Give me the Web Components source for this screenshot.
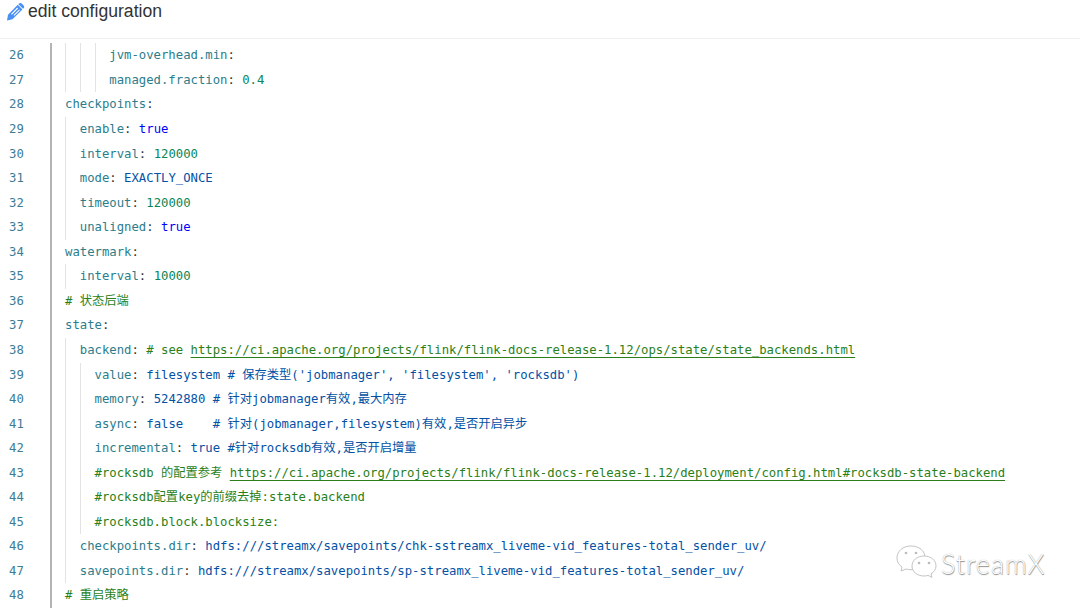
<!doctype html>
<html lang="en">
<head>
<meta charset="utf-8">
<title>edit configuration</title>
<style>
  html, body { margin: 0; background: #fff; }
</style>
</head>
<body>

<template id="page-tpl">
  <style>
    :host { display: block; position: relative; width: 1080px; height: 610px; overflow: hidden; background: #fff; }
  </style>
  <slot name="header"></slot>
  <slot></slot>
  <slot name="overlay"></slot>
</template>

<template id="header-tpl">
  <style>
    :host {
      display: flex; align-items: center; gap: 3px;
      box-sizing: border-box; height: 39px; padding: 0 0 16px 6px;
      border-bottom: 1px solid #f0f0f0;
      font: 17.6px/22px "Liberation Sans", Arial, sans-serif; color: #333;
    }
    svg { width: 19px; height: 19px; flex: none; }
  </style>
  <svg viewBox="0 0 19 19" aria-hidden="true">
    <path fill="#4a90f5" d="M11.800 2.800l4.600 4.600-9.900 9.900-5.500 1.200 1-5.700z"/>
    <path fill="#4a90f5" d="M13 1.600c.8-.8 2-.8 2.800 0l1.800 1.800c.8.800.8 2 0 2.800l-.6.6-4.600-4.600z"/>
    <path fill="#fff" d="M11.300 5.600l.8.8-6.300 6.300-.8-.8z"/>
    <path fill="#fff" d="M13.200 7.500l.7.700-5.600 5.600-.7-.7z"/>
  </svg>
  <slot></slot>
</template>

<template id="editor-tpl">
  <style>
    :host { display: block; padding-top: 4.4px; }
  </style>
  <slot></slot>
</template>

<template id="line-tpl"><style>
    :host {
      display: flex; height: 24.55px;
      font: 12.275px/24.55px "DejaVu Sans Mono", Menlo, "Noto Sans CJK SC", monospace;
      color: #333;
    }
    .num { box-sizing: border-box; width: 50px; flex: none; padding-left: 9px; color: #3d7c94; }
    .bar { width: 2px; flex: none; background: #b4b4b4; }
    .code { display: flex; padding-left: 13px; white-space: pre; }
    .guides { display: flex; }
    .guide { width: 14.78px; flex: none; box-sizing: border-box; border-left: 1px solid #e3e3e3; }
  </style><div class="num"></div><div class="bar"></div><div class="code"><div class="guides"></div><div class="text"><slot></slot></div></div></template>

<template id="tok-tpl"><style>
    :host { display: inline; }
    :host([t=k]) { color: #2b7d8c; }
    :host([t=s]) { color: #0451a5; }
    :host([t=n]) { color: #098658; }
    :host([t=b]) { color: #0000ff; }
    :host([t=c]) { color: #2a7f1a; }
    :host([t=u]) { color: #2a7f1a; text-decoration: underline; text-underline-offset: 3px; }
  </style><slot></slot></template>

<template id="mark-tpl">
  <style>
    :host {
      position: absolute; left: 895px; top: 544px;
      display: flex; align-items: center; gap: 2px;
      font: 300 27px/40px Lato, "Liberation Sans", sans-serif; color: #fff;
      letter-spacing: 1px;
      text-shadow: 0.5px 0.5px 1px #8a8a8a, 0 0 1px #a8a8a8;
    }
    svg { width: 44px; height: 40px; flex: none; }
  </style>
  <svg viewBox="0 0 44 40" fill="#fff" stroke="#c4c4c4" stroke-width="1">
    <path d="M16 2c-8 0-14 5-14 12 0 4 2 7 5 9l-1 4 5-2c2 .5 3 .7 5 .7 8 0 14-5 14-12S24 2 16 2z"/>
    <path d="M29 12c-7 0-12 4.500-12 10s5 10 12 10c1.500 0 3-.2 4-.6l4 2-1-3.500c3-2 5-4.500 5-8 0-5.500-5-9.900-12-9.900z"/>
    <circle cx="11" cy="9" r="1.300" fill="#bbb" stroke="none"/>
    <circle cx="21" cy="9" r="1.300" fill="#bbb" stroke="none"/>
    <circle cx="24" cy="19" r="1.300" fill="#bbb" stroke="none"/>
    <circle cx="34" cy="19" r="1.300" fill="#bbb" stroke="none"/>
  </svg>
  <slot></slot>
</template>

<script>
  function plain(name, tpl) {
    customElements.define(name, class extends HTMLElement {
      constructor() {
        super();
        this.attachShadow({mode: 'open'}).appendChild(document.getElementById(tpl).content.cloneNode(true));
      }
    });
  }

  plain('x-page', 'page-tpl');
  plain('x-editor-header', 'header-tpl');
  plain('x-editor', 'editor-tpl');
  plain('x-tok', 'tok-tpl');
  plain('x-watermark', 'mark-tpl');

  class CodeLine extends HTMLElement {
    constructor() {
      super();
      this.attachShadow({mode: 'open'}).appendChild(document.getElementById('line-tpl').content.cloneNode(true));
    }

    connectedCallback() {
      const root = this.shadowRoot;
      root.querySelector('.num').textContent = this.getAttribute('n');
      const guides = root.querySelector('.guides');
      const count = Number(this.getAttribute('g') || 0);
      guides.textContent = '';
      for (let i = 0; i < count; i++) {
        const g = document.createElement('div');
        g.className = 'guide';
        guides.appendChild(g);
      }
    }
  }
  customElements.define('x-line', CodeLine);
</script>

<x-page>
  <x-editor-header slot="header">edit configuration</x-editor-header>
  <x-editor>
    <x-line n="26" g="3"><x-tok t="k">jvm-overhead.min</x-tok>:</x-line>
    <x-line n="27" g="3"><x-tok t="k">managed.fraction</x-tok>: <x-tok t="n">0.4</x-tok></x-line>
    <x-line n="28"><x-tok t="k">checkpoints</x-tok>:</x-line>
    <x-line n="29" g="1"><x-tok t="k">enable</x-tok>: <x-tok t="b">true</x-tok></x-line>
    <x-line n="30" g="1"><x-tok t="k">interval</x-tok>: <x-tok t="n">120000</x-tok></x-line>
    <x-line n="31" g="1"><x-tok t="k">mode</x-tok>: <x-tok t="s">EXACTLY_ONCE</x-tok></x-line>
    <x-line n="32" g="1"><x-tok t="k">timeout</x-tok>: <x-tok t="n">120000</x-tok></x-line>
    <x-line n="33" g="1"><x-tok t="k">unaligned</x-tok>: <x-tok t="b">true</x-tok></x-line>
    <x-line n="34"><x-tok t="k">watermark</x-tok>:</x-line>
    <x-line n="35" g="1"><x-tok t="k">interval</x-tok>: <x-tok t="n">10000</x-tok></x-line>
    <x-line n="36"><x-tok t="c"># 状态后端</x-tok></x-line>
    <x-line n="37"><x-tok t="k">state</x-tok>:</x-line>
    <x-line n="38" g="1"><x-tok t="k">backend</x-tok>: <x-tok t="c"># see </x-tok><x-tok t="u">https://ci.apache.org/projects/flink/flink-docs-release-1.12/ops/state/state_backends.html</x-tok></x-line>
    <x-line n="39" g="2"><x-tok t="k">value</x-tok>: <x-tok t="s">filesystem # 保存类型('jobmanager', 'filesystem', 'rocksdb')</x-tok></x-line>
    <x-line n="40" g="2"><x-tok t="k">memory</x-tok>: <x-tok t="s">5242880 # 针对jobmanager有效,最大内存</x-tok></x-line>
    <x-line n="41" g="2"><x-tok t="k">async</x-tok>: <x-tok t="s">false    # 针对(jobmanager,filesystem)有效,是否开启异步</x-tok></x-line>
    <x-line n="42" g="2"><x-tok t="k">incremental</x-tok>: <x-tok t="s">true #针对rocksdb有效,是否开启增量</x-tok></x-line>
    <x-line n="43" g="2"><x-tok t="c">#rocksdb 的配置参考 </x-tok><x-tok t="u">https://ci.apache.org/projects/flink/flink-docs-release-1.12/deployment/config.html#rocksdb-state-backend</x-tok></x-line>
    <x-line n="44" g="2"><x-tok t="c">#rocksdb配置key的前缀去掉:state.backend</x-tok></x-line>
    <x-line n="45" g="2"><x-tok t="c">#rocksdb.block.blocksize:</x-tok></x-line>
    <x-line n="46" g="1"><x-tok t="k">checkpoints.dir</x-tok>: <x-tok t="s">hdfs:///streamx/savepoints/chk-sstreamx_liveme-vid_features-total_sender_uv/</x-tok></x-line>
    <x-line n="47" g="1"><x-tok t="k">savepoints.dir</x-tok>: <x-tok t="s">hdfs:///streamx/savepoints/sp-streamx_liveme-vid_features-total_sender_uv/</x-tok></x-line>
    <x-line n="48"><x-tok t="c"># 重启策略</x-tok></x-line>
  </x-editor>
  <x-watermark slot="overlay">StreamX</x-watermark>
</x-page>

</body>
</html>
